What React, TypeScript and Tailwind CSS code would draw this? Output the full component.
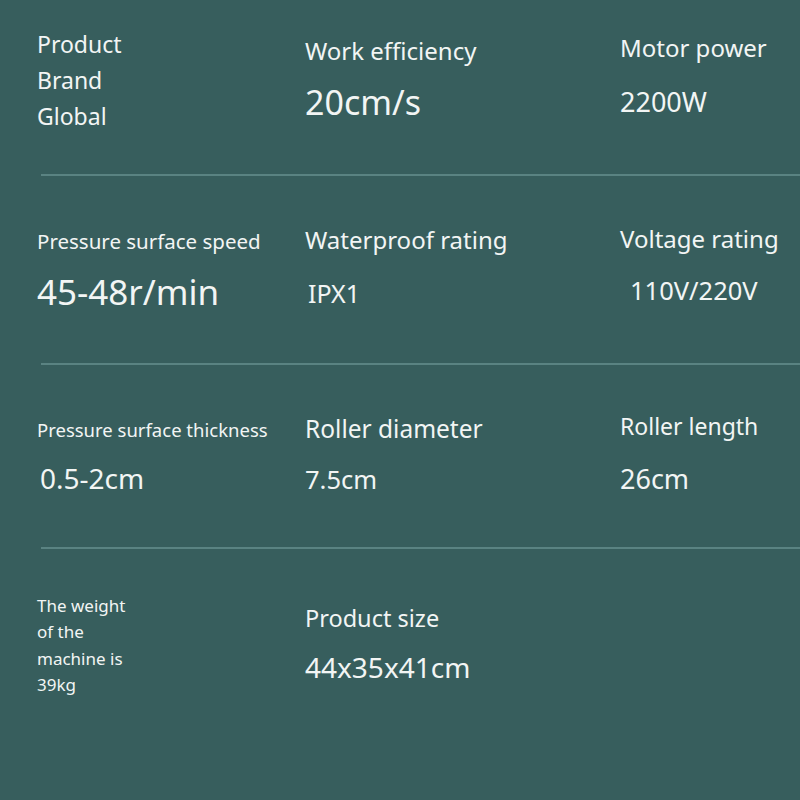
const font = { fontFamily: '"Noto Sans", "Open Sans", sans-serif' }

function Divider() {
  return <div className="ml-[41px] h-[2px] bg-[#5a8382]" />
}

export default function App() {
  return (
    <div className="w-[800px] h-[800px] overflow-hidden bg-[#375e5d] text-[#f2f5f4]" style={font}>
      {/* row 1 */}
      <div className="h-[174px] pl-[37px] grid grid-cols-[268px_315px_1fr]">
        <div className="pt-[26px] text-[23px] leading-[36px]">
          <p>Product</p>
          <p>Brand</p>
          <p>Global</p>
        </div>
        <div className="pt-[35px]">
          <p className="text-[24px] leading-[32px]">Work efficiency</p>
          <p className="mt-[13px] text-[34px] leading-[44px]">20cm/s</p>
        </div>
        <div className="pt-[32px]">
          <p className="text-[24px] leading-[32px]">Motor power</p>
          <p className="mt-[20px] text-[27px] leading-[36px]">2200W</p>
        </div>
      </div>
      <Divider />

      {/* row 2 */}
      <div className="h-[187px] pl-[37px] grid grid-cols-[268px_315px_1fr]">
        <div className="pt-[51px]">
          <p className="text-[20.5px] leading-[28px] whitespace-nowrap">Pressure surface speed</p>
          <p className="mt-[15px] text-[35px] leading-[44px]">45-48r/min</p>
        </div>
        <div className="pt-[48px]">
          <p className="text-[24px] leading-[32px]">Waterproof rating</p>
          <p className="mt-[21px] pl-[3px] text-[25px] leading-[32px]">IPX1</p>
        </div>
        <div className="pt-[47px]">
          <p className="text-[24px] leading-[32px] whitespace-nowrap">Voltage rating</p>
          <p className="mt-[19px] pl-[10px] text-[25.5px] leading-[32px]">110V/220V</p>
        </div>
      </div>
      <Divider />

      {/* row 3 */}
      <div className="h-[182px] pl-[37px] grid grid-cols-[268px_315px_1fr]">
        <div className="pt-[52px]">
          <p className="text-[18.5px] leading-[26px] whitespace-nowrap">Pressure surface thickness</p>
          <p className="mt-[17px] pl-[3px] text-[28px] leading-[36px]">0.5-2cm</p>
        </div>
        <div className="pt-[48px]">
          <p className="text-[24.5px] leading-[32px]">Roller diameter</p>
          <p className="mt-[18px] text-[25.5px] leading-[32px]">7.5cm</p>
        </div>
        <div className="pt-[45px]">
          <p className="text-[23px] leading-[32px]">Roller length</p>
          <p className="mt-[19px] text-[27px] leading-[36px]">26cm</p>
        </div>
      </div>
      <Divider />

      {/* row 4 */}
      <div className="pl-[37px] grid grid-cols-[268px_315px_1fr]">
        <div className="pt-[44px] text-[17px] leading-[26.3px]">
          <p>The weight</p>
          <p>of the</p>
          <p>machine is</p>
          <p>39kg</p>
        </div>
        <div className="pt-[53px]">
          <p className="text-[23.5px] leading-[32px]">Product size</p>
          <p className="mt-[15px] text-[28px] leading-[36px]">44x35x41cm</p>
        </div>
        <div />
      </div>
    </div>
  )
}
